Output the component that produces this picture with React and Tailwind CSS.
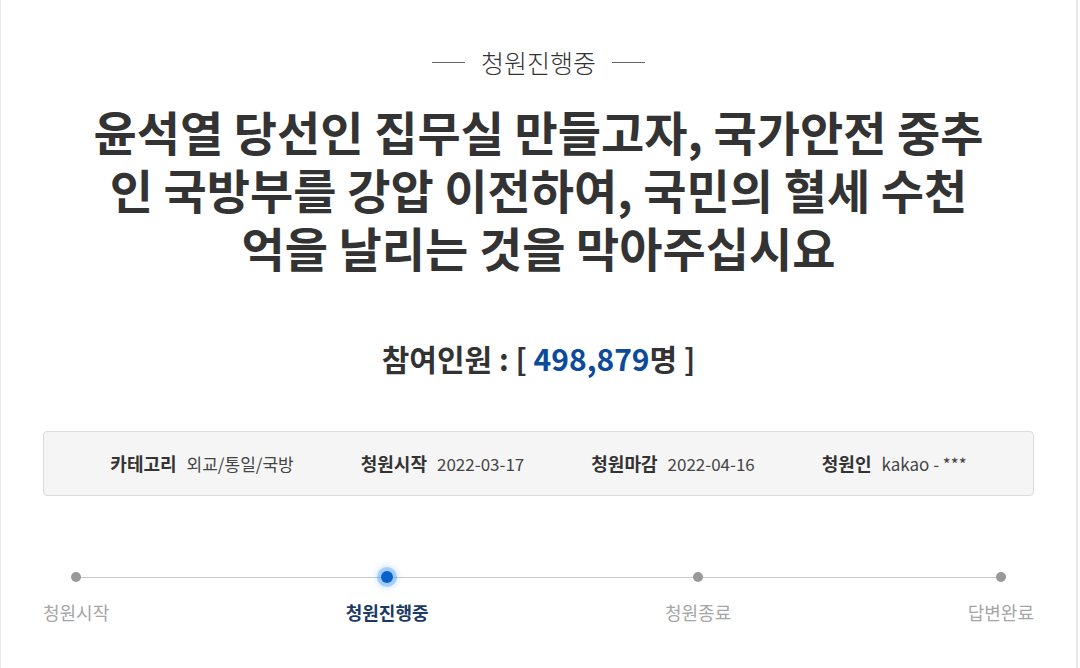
import React from "react";

const font = { fontFamily: '"Noto Sans CJK KR", "Noto Sans", sans-serif' };

function Step({ label, active }) {
  return (
    <div className="flex flex-col items-center relative z-10">
      {active ? (
        <div className="w-[12px] h-[12px] my-[-1px] rounded-full bg-[#0a62c9] shadow-[0_0_0_4px_rgba(60,150,245,0.35),0_0_6px_5px_rgba(120,180,250,0.35)]" />
      ) : (
        <div className="w-[10px] h-[10px] rounded-full bg-[#999999]" />
      )}
      <div
        className={
          "mt-[17px] text-[18px] leading-[26px] whitespace-nowrap " +
          (active ? "font-bold text-[#1b3a66]" : "text-[#a6a6a6]")
        }
      >
        {label}
      </div>
    </div>
  );
}

function Info({ label, value }) {
  return (
    <div className="flex items-center gap-[10px] whitespace-nowrap">
      <span className="font-bold text-[18px] text-[#333]">{label}</span>
      <span className="text-[17px] text-[#444]">{value}</span>
    </div>
  );
}

export default function App() {
  return (
    <div className="w-[1080px] h-[668px] bg-white overflow-hidden" style={font}>
      <div className="w-[1078px] h-[668px] border-l border-r-2 border-[#e8e8e8] px-[42px] pt-[44px]">
        <div className="flex items-center justify-center gap-[16px]">
          <div className="w-[33px] h-px bg-[#666]" />
          <div className="text-[25px] leading-[36px] font-light text-[#333]">청원진행중</div>
          <div className="w-[33px] h-px bg-[#666]" />
        </div>
        <h1 className="mt-[22px] text-center text-[47px] leading-[58px] font-bold text-[#333]">
          윤석열 당선인 집무실 만들고자, 국가안전 중추
          <br />
          인 국방부를 강압 이전하여, 국민의 혈세 수천
          <br />
          억을 날리는 것을 막아주십시요
        </h1>
        <div className="mt-[61px] text-center text-[30px] leading-[42px] font-bold text-[#333]">
          참여인원 : [ <span className="text-[#0c4a9c]">498,879</span>명 ]
        </div>
        <div className="mt-[52px] h-[65px] bg-[#f5f5f5] border border-[#dcdcdc] rounded-[4px] flex items-center justify-center gap-[67px]">
          <Info label="카테고리" value="외교/통일/국방" />
          <Info label="청원시작" value="2022-03-17" />
          <Info label="청원마감" value="2022-04-16" />
          <Info label="청원인" value="kakao - ***" />
        </div>
        <div className="relative mt-[76px] flex justify-between">
          <div className="absolute left-[32px] right-[33px] top-[5px] h-px bg-[#c8c8c8]" />
          <Step label="청원시작" />
          <Step label="청원진행중" active />
          <Step label="청원종료" />
          <Step label="답변완료" />
        </div>
      </div>
    </div>
  );
}
